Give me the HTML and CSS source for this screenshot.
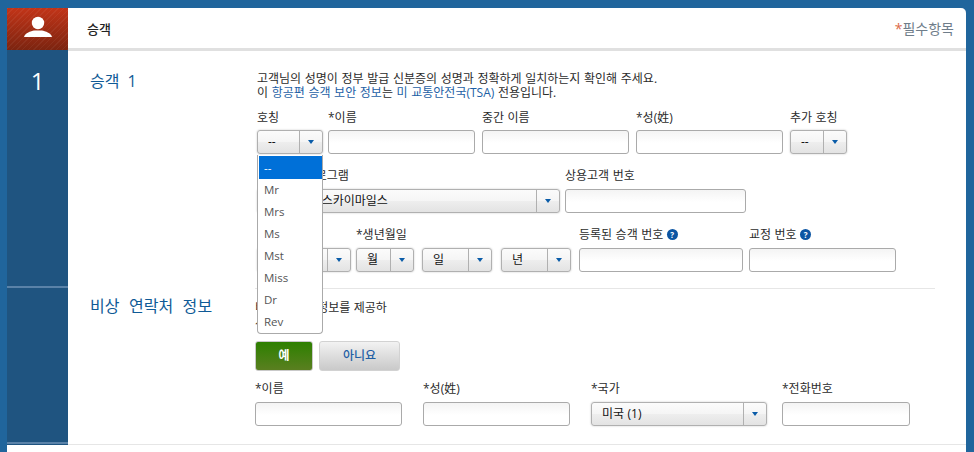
FILE: index.html
```html
<!DOCTYPE html>
<html lang="ko">
<head>
<meta charset="utf-8">
<title>승객</title>
<link rel="stylesheet" href="styles.css">
</head>
<body>
<div class="card">
  <header class="card-head">
    <div class="head-icon">
      <svg width="30" height="30" viewBox="0 0 30 30"><circle cx="15" cy="9" r="6.2" fill="#fff"/><path d="M1 23c1-4 7-6 10-6.500h8c3 .5 9 2.500 10 6.500z" fill="#fff"/></svg>
    </div>
    <div class="head-main">
      <h1 class="head-title">승객</h1>
      <span class="head-note"><span class="req">*</span>필수항목</span>
    </div>
  </header>

  <section class="section">
    <div class="side side-num">1</div>
    <div class="main main-inset">
      <h2 class="section-title title-a">승객 1</h2>
      <div class="form form-a">
        <p class="intro">고객님의 성명이 정부 발급 신분증의 성명과 정확하게 일치하는지 확인해 주세요.<br>이 <a class="link">항공편 승객 보안 정보</a>는 <a class="link">미 교통안전국(TSA)</a> 전용입니다.</p>

        <div class="row row-first">
          <div class="field w66 open">
            <label class="lbl">호칭</label>
            <div class="sel"><span class="sel-text">--</span><span class="sel-btn"><i class="arrow"></i></span></div>
            <ul class="list">
              <li class="opt opt-on">--</li>
              <li class="opt">Mr</li>
              <li class="opt">Mrs</li>
              <li class="opt">Ms</li>
              <li class="opt">Mst</li>
              <li class="opt">Miss</li>
              <li class="opt">Dr</li>
              <li class="opt">Rev</li>
            </ul>
          </div>
          <div class="field w147 ml5"><label class="lbl">*이름</label><div class="inp"></div></div>
          <div class="field w147 ml7"><label class="lbl">중간 이름</label><div class="inp"></div></div>
          <div class="field w147 ml7"><label class="lbl">*성(姓)</label><div class="inp"></div></div>
          <div class="field w57 ml7"><label class="lbl">추가 호칭</label><div class="sel"><span class="sel-text">--</span><span class="sel-btn"><i class="arrow"></i></span></div></div>
        </div>

        <div class="row">
          <div class="field w303"><label class="lbl">상용고객 프로그램</label><div class="sel"><span class="sel-text sel-text-wide">델타항공 스카이마일스</span><span class="sel-btn"><i class="arrow"></i></span></div></div>
          <div class="field w181 ml5"><label class="lbl">상용고객 번호</label><div class="inp"></div></div>
        </div>

        <div class="row">
          <div class="field w94"><label class="lbl">*성별</label><div class="sel"><span class="sel-text">--</span><span class="sel-btn"><i class="arrow"></i></span></div></div>
          <div class="field w58 ml5"><label class="lbl nowrap">*생년월일</label><div class="sel"><span class="sel-text">월</span><span class="sel-btn"><i class="arrow"></i></span></div></div>
          <div class="field w70 ml8"><div class="lbl"></div><div class="sel"><span class="sel-text">일</span><span class="sel-btn"><i class="arrow"></i></span></div></div>
          <div class="field w70 ml9"><div class="lbl"></div><div class="sel"><span class="sel-text">년</span><span class="sel-btn"><i class="arrow"></i></span></div></div>
          <div class="field w164 ml8"><label class="lbl">등록된 승객 번호 <i class="help">?</i></label><div class="inp"></div></div>
          <div class="field w147 ml6"><label class="lbl">교정 번호 <i class="help">?</i></label><div class="inp"></div></div>
        </div>
      </div>
    </div>
  </section>

  <section class="section section-b">
    <div class="side"></div>
    <div class="main">
      <h2 class="section-title title-b">비상 연락처 정보</h2>
      <div class="form">
        <p class="ask">비상 연락처 정보를 제공하시겠습니까?</p>
        <div class="btns">
          <button class="btn btn-yes">예</button>
          <button class="btn btn-no">아니요</button>
        </div>
        <div class="row row-contact">
          <div class="field w147"><label class="lbl">*이름</label><div class="inp"></div></div>
          <div class="field w147 ml21"><label class="lbl">*성(姓)</label><div class="inp"></div></div>
          <div class="field w176 ml21"><label class="lbl">*국가</label><div class="sel"><span class="sel-text">미국 (1)</span><span class="sel-btn"><i class="arrow"></i></span></div></div>
          <div class="field w128 ml15"><label class="lbl">*전화번호</label><div class="inp"></div></div>
        </div>
      </div>
    </div>
  </section>
</div>
</body>
</html>
```

FILE: styles.css
```css
* { box-sizing: border-box; }
html, body { margin: 0; height: 452px; overflow: hidden; }
body {
  background: #20659c;
  padding: 8px 8px 0 7px;
  font-family: "Open Sans", "Noto Sans CJK KR", sans-serif;
  font-size: 12px;
  line-height: 14px;
  word-spacing: .35px;
  color: #2b2b2b;
}
.card {
  background: #fff;
  border-radius: 0 5px 0 0;
  height: 444px;
  overflow: hidden;
}
.card-head { display: flex; height: 43px; background: #1f5480; }
.head-icon {
  width: 61px;
  height: 42px;
  display: flex;
  align-items: center;
  justify-content: center;
  background:
    repeating-linear-gradient(135deg, rgba(255,255,255,.05) 0 1px, rgba(0,0,0,0) 1px 4px),
    linear-gradient(#c23418, #7c2410);
}
.head-main {
  flex: 1;
  display: flex;
  align-items: center;
  justify-content: space-between;
  padding: 1px 12px 0 19px;
  background: #fff;
  border-bottom: 3px solid #e0e0e0;
}
.head-title { margin: 0; font-size: 13px; font-weight: 500; color: #222; }
.head-note { font-size: 14px; color: #6f7d8a; }
.req { color: #dc6a4a; }

.section { display: flex; height: 238px; }
.section-b { height: 156px; }
.side {
  width: 61px;
  flex: none;
  background: #1f5480;
  border-bottom: 2px solid #5a82a8;
  margin-bottom: 1px;
  box-shadow: 0 1px 0 #1f5480;
}
.side-num {
  color: #fff;
  font-size: 24px;
  line-height: 30px;
  padding-top: 15px;
  text-align: center;
}
.main {
  flex: 1;
  display: flex;
  padding-left: 23px;
  border-bottom: 1px solid #e6e6e6;
  min-width: 0;
}
.main-inset { border-bottom: 0; position: relative; }
.main-inset::after {
  content: "";
  position: absolute;
  left: 187px;
  width: 680px;
  bottom: 0;
  height: 1px;
  background: #e6e6e6;
}
.section-title {
  margin: 0;
  width: 164px;
  flex: none;
  font-size: 16px;
  line-height: 20px;
  font-weight: 400;
  color: #0f5a96;
  word-spacing: 5px;
  letter-spacing: .1px;
}
.title-a { padding-top: 20px; margin-left: -1px; margin-right: 1px; word-spacing: 3.500px; }
.title-b { padding-top: 7px; margin-left: -1px; margin-right: 1px; }
.form { padding-top: 11px; }
.form-a { padding: 21px 0 0 2px; }
.intro { margin: 0; word-spacing: .5px; }
.link { color: #1d5fa5; }
.row { display: flex; margin-top: 14px; }
.row-first { margin-top: 10px; }
.row-first .lbl { height: 20px; }
.row-contact { margin-top: 10px; }
.field { flex: none; position: relative; }
.lbl { display: block; height: 21px; padding-top: 1px; white-space: nowrap; }
.nowrap { white-space: nowrap; }
.w57 { width: 57px; } .w58 { width: 58px; } .w66 { width: 66px; } .w70 { width: 70px; }
.w94 { width: 94px; } .w128 { width: 128px; } .w147 { width: 147px; } .w164 { width: 164px; }
.w176 { width: 176px; } .w181 { width: 181px; } .w303 { width: 303px; }
.ml5 { margin-left: 5px; } .ml6 { margin-left: 6px; } .ml7 { margin-left: 7px; } .ml8 { margin-left: 8px; }
.ml9 { margin-left: 9px; } .ml15 { margin-left: 15px; } .ml21 { margin-left: 21px; }

.inp {
  height: 24px;
  border: 1px solid #aaa;
  border-radius: 3px;
  background: linear-gradient(#f4f4f4, #fff 55%);
}
.sel {
  height: 24px;
  display: flex;
  border: 1px solid #b0b0b0;
  border-radius: 3px;
  box-shadow: 0 0 2px #c4c4c4;
  background: linear-gradient(#fbfbfb 0, #f5f5f5 50%, #eee 50%, #e3e3e3 100%);
  color: #111;
}
.sel-text {
  flex: 1;
  min-width: 0;
  padding-left: 10px;
  line-height: 21px;
  white-space: nowrap;
  overflow: hidden;
}
.sel-text-wide { padding-left: 16px; }
.sel-btn {
  width: 23px;
  flex: none;
  border-left: 1px solid #b0b0b0;
  display: flex;
  align-items: center;
  justify-content: center;
}
.arrow {
  width: 0;
  height: 0;
  border-left: 3.500px solid transparent;
  border-right: 3.500px solid transparent;
  border-top: 4px solid #0a5ca8;
}
.help {
  display: inline-block;
  width: 11px;
  height: 11px;
  margin-left: 0;
  border-radius: 50%;
  background: #0b55a3;
  color: #fff;
  font: 700 8px/11px "Open Sans", sans-serif;
  text-align: center;
  vertical-align: 1px;
}

.list {
  position: absolute;
  top: 45px;
  left: 0;
  width: 66px;
  margin: 0;
  padding: 1px 0 0 1px;
  list-style: none;
  background: #fff;
  border: 1px solid #aaa;
  border-top: 0;
  border-radius: 0 0 4px 4px;
  z-index: 5;
  font-size: 11.500px;
  color: #555;
}
.opt { height: 22px; line-height: 21px; padding-left: 5px; }
.opt-on { height: 23px; line-height: 23px; background: #0070d8; color: #fff; }

.ask { margin: 1px 0 0; width: 135px; }
.btns { display: flex; gap: 6px; margin-top: 12px; }
.btn {
  height: 30px;
  padding: 0;
  border-radius: 3px;
  font: 500 12px/14px "Open Sans", "Noto Sans CJK KR", sans-serif;
}
.btn-yes {
  width: 58px;
  border: 1px solid #c9c9c9;
  background: linear-gradient(#2d8000, #5a7f20);
  color: #fff;
  font-weight: 700;
}
.btn-no {
  width: 81px;
  border: 1px solid #d2d2d2;
  background: linear-gradient(#f2f2f2, #c9c9c9);
  color: #1f5fa5;
}
```
